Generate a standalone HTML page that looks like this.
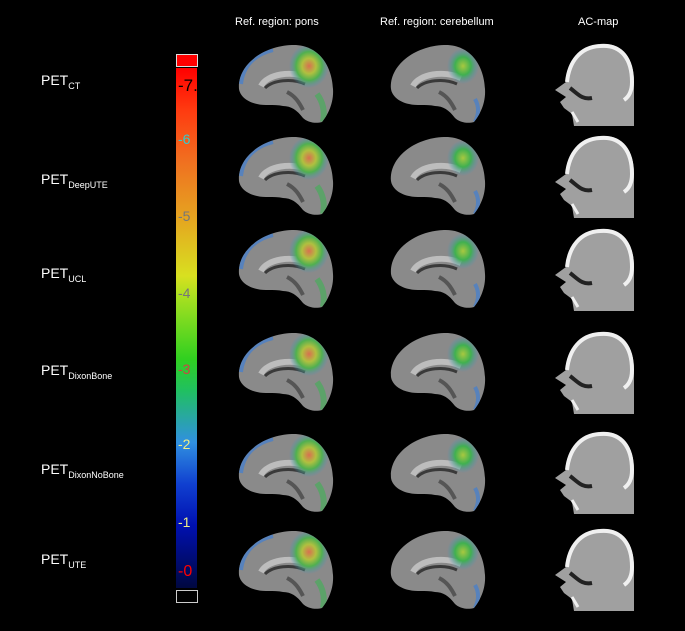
<!DOCTYPE html>
<html><head><meta charset="utf-8"><style>
body{margin:0;background:#000;width:685px;height:631px;overflow:hidden;font-family:"Liberation Sans",sans-serif;position:relative}
.t{position:absolute;color:#fff;font-size:11px}
.lab{position:absolute;color:#fff;font-size:14px;left:41px}
.lab sub{font-size:9px;vertical-align:-4px}
.cb{position:absolute;left:176px;top:68px;width:21px;height:520px;background:linear-gradient(#ff0000 0%,#ff3a10 8%,#f07020 18%,#e6a020 28%,#d8e020 40%,#a8e020 44%,#30d020 56%,#20c060 62%,#3090e0 72%,#1040d0 80%,#0010b0 88%,#000840 100%)}
.n{position:absolute;font-size:14px;left:178px}
svg{position:absolute;left:0;top:0}
</style></head><body>
<div class="t" style="left:235px;top:16px">Ref. region: pons</div>
<div class="t" style="left:380px;top:16px">Ref. region: cerebellum</div>
<div class="t" style="left:578px;top:16px">AC-map</div>
<div class="lab" style="top:72px">PET<sub>CT</sub></div>
<div class="lab" style="top:171px">PET<sub>DeepUTE</sub></div>
<div class="lab" style="top:265px">PET<sub>UCL</sub></div>
<div class="lab" style="top:362px">PET<sub>DixonBone</sub></div>
<div class="lab" style="top:461px">PET<sub>DixonNoBone</sub></div>
<div class="lab" style="top:551px">PET<sub>UTE</sub></div>
<div style="position:absolute;left:176px;top:54px;width:20px;height:11px;background:#f00;border:1px solid #ddd"></div>
<div class="cb"></div>
<div style="position:absolute;left:176px;top:590px;width:20px;height:11px;border:1px solid #ccc"></div>
<div class="n" style="top:76px;color:#000;font-size:17px">-7.</div>
<div class="n" style="top:131px;color:#3cc">-6</div>
<div class="n" style="top:208px;color:#777">-5</div>
<div class="n" style="top:285px;color:#777">-4</div>
<div class="n" style="top:361px;color:#c44">-3</div>
<div class="n" style="top:436px;color:#ee8">-2</div>
<div class="n" style="top:514px;color:#ee8">-1</div>
<div class="n" style="top:563px;color:#f00;font-size:16px">-0</div>
<svg width="685" height="631">
<defs>
<radialGradient id="hot" cx="0.5" cy="0.5" r="0.5"><stop offset="0" stop-color="#d87050"/><stop offset="0.35" stop-color="#b0c040"/><stop offset="0.65" stop-color="#50b050"/><stop offset="1" stop-color="#4a90c0" stop-opacity="0"/></radialGradient>
<radialGradient id="warm" cx="0.5" cy="0.5" r="0.5"><stop offset="0" stop-color="#a8c840"/><stop offset="0.5" stop-color="#40b050"/><stop offset="1" stop-color="#4a90c0" stop-opacity="0"/></radialGradient>
<clipPath id="bc"><path d="M2,45 C0,22 25,2 55,1 C80,0 95,20 96,45 C97,60 90,72 85,78 C78,80 70,78 66,74 C60,66 54,62 46,62 C36,60 28,62 20,60 C10,58 3,52 2,45 Z"/></clipPath>
<g id="base">
<path d="M2,45 C0,22 25,2 55,1 C80,0 95,20 96,45 C97,60 90,72 85,78 C78,80 70,78 66,74 C60,66 54,62 46,62 C36,60 28,62 20,60 C10,58 3,52 2,45 Z" fill="#8a8a8a"/>
<path d="M24,42 C30,30 55,26 72,34" stroke="#bdbdbd" stroke-width="6" fill="none"/>
<path d="M28,44 C36,36 55,34 68,40" stroke="#3a3a3a" stroke-width="3" fill="none"/>
<path d="M50,48 C58,52 62,58 66,66" stroke="#555" stroke-width="4" fill="none"/>
</g>
<g id="br"><use href="#base"/>
<g clip-path="url(#bc)">
<ellipse cx="72" cy="22" rx="20" ry="22" fill="url(#hot)"/>
<path d="M4,40 C6,22 18,10 36,6" stroke="#4a80c8" stroke-width="4" fill="none" opacity="0.8"/>
<path d="M80,50 C86,58 88,68 86,78" stroke="#50a860" stroke-width="6" fill="none" opacity="0.8"/>
</g></g>
<g id="br2"><use href="#base"/>
<g clip-path="url(#bc)">
<ellipse cx="74" cy="22" rx="16" ry="18" fill="url(#warm)"/>
<path d="M86,55 C90,62 90,70 86,78" stroke="#4a80c8" stroke-width="4" fill="none" opacity="0.8"/>
</g></g>
<g id="ac">
<path d="M48,2 C70,0 82,15 82,40 L82,84 L22,84 L20,72 L12,66 L8,60 L14,55 L3,48 L14,40 C16,20 28,4 48,2 Z" fill="#a0a0a0"/>
<path d="M15,40 C17,20 28,5 48,4 C70,2 80,18 80,40 C80,48 78,54 72,58" stroke="#f0f0f0" stroke-width="4" fill="none"/>
<path d="M18,46 C26,52 30,58 40,56" stroke="#222" stroke-width="4" fill="none"/>
<path d="M20,70 L26,80" stroke="#eee" stroke-width="3" fill="none"/>
</g>
</defs>
<use href="#br" x="237" y="44"/><use href="#br2" x="389" y="44"/><use href="#ac" x="552" y="42"/>
<use href="#br" x="237" y="136"/><use href="#br2" x="389" y="136"/><use href="#ac" x="552" y="134"/>
<use href="#br" x="237" y="229"/><use href="#br2" x="389" y="229"/><use href="#ac" x="552" y="227"/>
<use href="#br" x="237" y="332"/><use href="#br2" x="389" y="332"/><use href="#ac" x="552" y="330"/>
<use href="#br" x="237" y="433"/><use href="#br2" x="389" y="433"/><use href="#ac" x="552" y="430"/>
<use href="#br" x="237" y="530"/><use href="#br2" x="389" y="530"/><use href="#ac" x="552" y="527"/>
</svg>
</body></html>
